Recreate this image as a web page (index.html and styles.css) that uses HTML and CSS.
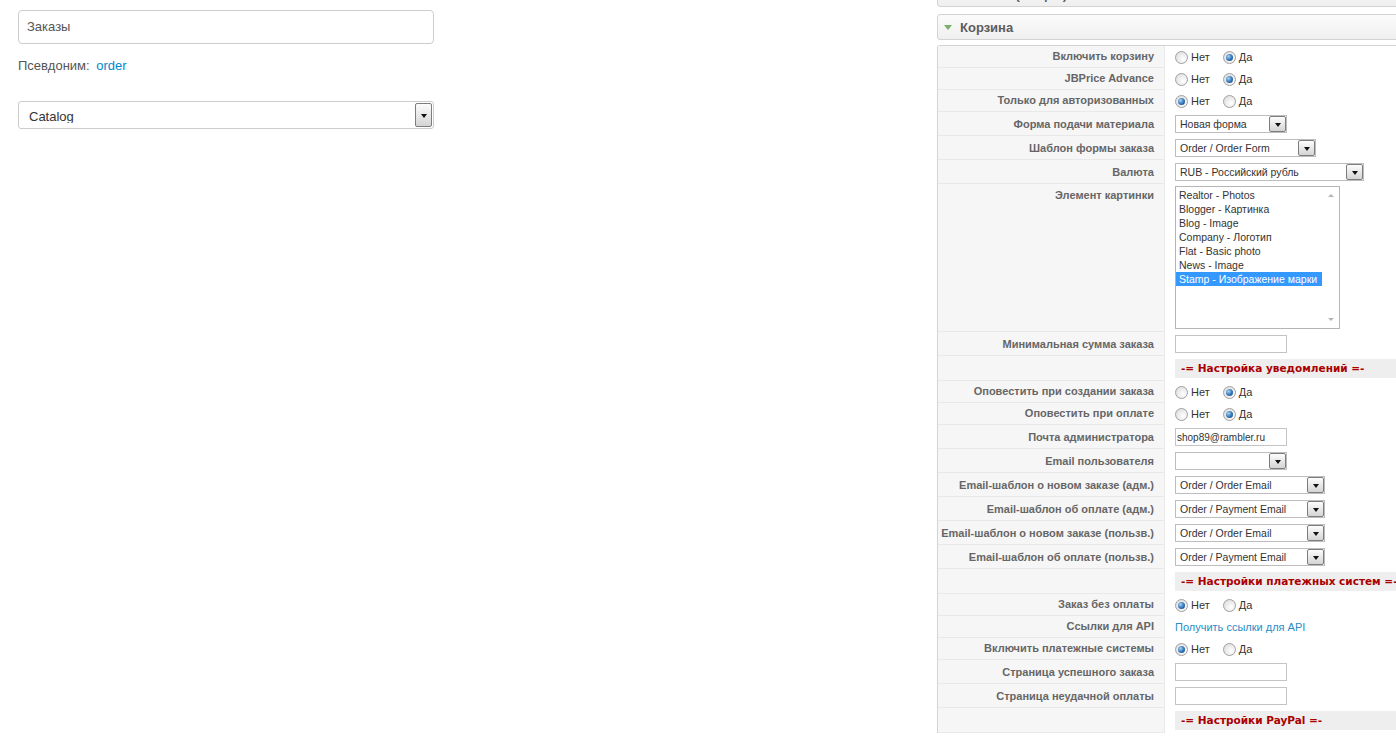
FILE: index.html
```html
<!DOCTYPE html>
<html lang="ru">
<head>
  <meta charset="UTF-8" />
  <meta name="viewport" content="width=device-width, initial-scale=1.0"/>
  <title>Заказы</title>
  <link rel="stylesheet" href="styles.css">
</head>
<body>
  <div class="page">
    <div class="main">
      <div class="title-field">Заказы</div>
      <div class="alias">Псевдоним: <a href="#">order</a></div>
      <div class="big-select">
        <span class="big-select-text">Catalog</span>
        <span class="drop"></span>
      </div>
    </div>

    <div class="side">
      <div class="pane-head">Шаблон (общий)</div>
      <div class="pane-head open">Корзина</div>

      <table class="params">
        <tr>
          <td class="key">Включить корзину</td>
          <td class="val"><div class="radios"><span class="opt"><i class="radio"></i>Нет</span><span class="opt"><i class="radio on"></i>Да</span></div></td>
        </tr>
        <tr>
          <td class="key">JBPrice Advance</td>
          <td class="val"><div class="radios"><span class="opt"><i class="radio"></i>Нет</span><span class="opt"><i class="radio on"></i>Да</span></div></td>
        </tr>
        <tr>
          <td class="key">Только для авторизованных</td>
          <td class="val"><div class="radios"><span class="opt"><i class="radio on"></i>Нет</span><span class="opt"><i class="radio"></i>Да</span></div></td>
        </tr>
        <tr>
          <td class="key">Форма подачи материала</td>
          <td class="val"><div class="sel w-s"><span>Новая форма</span><span class="drop"></span></div></td>
        </tr>
        <tr>
          <td class="key">Шаблон формы заказа</td>
          <td class="val"><div class="sel w-m"><span>Order / Order Form</span><span class="drop"></span></div></td>
        </tr>
        <tr>
          <td class="key">Валюта</td>
          <td class="val"><div class="sel w-l"><span>RUB - Российский рубль</span><span class="drop"></span></div></td>
        </tr>
        <tr>
          <td class="key top">Элемент картинки</td>
          <td class="val tall">
            <div class="listbox">
              <ul>
                <li>Realtor - Photos</li>
                <li>Blogger - Картинка</li>
                <li>Blog - Image</li>
                <li>Company - Логотип</li>
                <li>Flat - Basic photo</li>
                <li>News - Image</li>
                <li class="picked">Stamp - Изображение марки</li>
              </ul>
              <div class="scroll"></div>
            </div>
          </td>
        </tr>
        <tr>
          <td class="key">Минимальная сумма заказа</td>
          <td class="val"><input class="txt" type="text" value=""></td>
        </tr>
        <tr>
          <td class="key"></td>
          <td class="val"><div class="bar">-= Настройка уведомлений =-</div></td>
        </tr>
        <tr>
          <td class="key">Оповестить при создании заказа</td>
          <td class="val"><div class="radios"><span class="opt"><i class="radio"></i>Нет</span><span class="opt"><i class="radio on"></i>Да</span></div></td>
        </tr>
        <tr>
          <td class="key">Оповестить при оплате</td>
          <td class="val"><div class="radios"><span class="opt"><i class="radio"></i>Нет</span><span class="opt"><i class="radio on"></i>Да</span></div></td>
        </tr>
        <tr>
          <td class="key">Почта администратора</td>
          <td class="val"><input class="txt" type="text" value="shop89@rambler.ru"></td>
        </tr>
        <tr>
          <td class="key">Email пользователя</td>
          <td class="val"><div class="sel w-s"><span></span><span class="drop"></span></div></td>
        </tr>
        <tr>
          <td class="key">Email-шаблон о новом заказе (адм.)</td>
          <td class="val"><div class="sel w-e"><span>Order / Order Email</span><span class="drop"></span></div></td>
        </tr>
        <tr>
          <td class="key">Email-шаблон об оплате (адм.)</td>
          <td class="val"><div class="sel w-e"><span>Order / Payment Email</span><span class="drop"></span></div></td>
        </tr>
        <tr>
          <td class="key">Email-шаблон о новом заказе (пользв.)</td>
          <td class="val"><div class="sel w-e"><span>Order / Order Email</span><span class="drop"></span></div></td>
        </tr>
        <tr>
          <td class="key">Email-шаблон об оплате (пользв.)</td>
          <td class="val"><div class="sel w-e"><span>Order / Payment Email</span><span class="drop"></span></div></td>
        </tr>
        <tr>
          <td class="key"></td>
          <td class="val"><div class="bar">-= Настройки платежных систем =-</div></td>
        </tr>
        <tr>
          <td class="key">Заказ без оплаты</td>
          <td class="val"><div class="radios"><span class="opt"><i class="radio on"></i>Нет</span><span class="opt"><i class="radio"></i>Да</span></div></td>
        </tr>
        <tr>
          <td class="key">Ссылки для API</td>
          <td class="val"><a class="api-link" href="#">Получить ссылки для API</a></td>
        </tr>
        <tr>
          <td class="key">Включить платежные системы</td>
          <td class="val"><div class="radios"><span class="opt"><i class="radio on"></i>Нет</span><span class="opt"><i class="radio"></i>Да</span></div></td>
        </tr>
        <tr>
          <td class="key">Страница успешного заказа</td>
          <td class="val"><input class="txt" type="text" value=""></td>
        </tr>
        <tr>
          <td class="key">Страница неудачной оплаты</td>
          <td class="val"><input class="txt" type="text" value=""></td>
        </tr>
        <tr>
          <td class="key"></td>
          <td class="val"><div class="bar">-= Настройки PayPal =-</div></td>
        </tr>
      </table>
    </div>
  </div>
</body>
</html>
```

FILE: styles.css
```css
body {
  margin: 0;
  overflow: hidden;
  background: #fff;
  font-family: "Liberation Sans", Arial, sans-serif;
  color: #333;
}
.page { display: flex; align-items: flex-start; }
.main { flex: none; width: 416px; margin: 10px 0 0 18px; }
.side { flex: none; width: 520px; margin: -19px 0 0 503px; }

/* left column */
.title-field {
  height: 34px;
  box-sizing: border-box;
  border: 1px solid #ccc;
  border-radius: 4px;
  padding: 0 8px;
  line-height: 32px;
  font-size: 13px;
  color: #555;
}
.alias { margin-top: 13px; font-size: 13px; line-height: 18px; color: #555; }
.alias a { color: #08c; text-decoration: none; margin-left: 3px; }
.big-select {
  display: flex;
  justify-content: space-between;
  margin-top: 26px;
  height: 28px;
  box-sizing: border-box;
  border: 1px solid #ccc;
  border-radius: 3px;
  padding: 1px 1px 1px 10px;
}
.big-select-text {
  align-self: flex-start;
  margin-top: 3px;
  height: 17px;
  overflow: hidden;
  line-height: 22px;
  font-size: 13px;
  color: #333;
}
.drop {
  flex: none;
  width: 17px;
  box-sizing: border-box;
  align-self: stretch;
  border: 1px solid #7d7d7d;
  border-radius: 2px;
  background: linear-gradient(#fdfdfd, #d4d4d4);
  display: flex;
  align-items: center;
  justify-content: center;
}
.drop::after {
  content: "";
  border-left: 3px solid transparent;
  border-right: 3px solid transparent;
  border-top: 4px solid #111;
  margin-top: 1px;
}

/* right column */
.pane-head {
  display: flex;
  align-items: center;
  gap: 8px;
  height: 26px;
  box-sizing: border-box;
  border: 1px solid #d3d3d3;
  border-radius: 3px;
  background: linear-gradient(#fbfbfb, #efefef);
  padding-left: 6px;
  font-size: 13px;
  font-weight: bold;
  color: #5c5c5c;
  margin-bottom: 7px;
}
.pane-head::before {
  content: "";
  border-top: 4px solid transparent;
  border-bottom: 4px solid transparent;
  border-left: 5px solid #78b064;
  margin: 0 3px 0 0;
}
.pane-head.open { margin-bottom: 5px; }
.pane-head.open::before {
  border-left: 4px solid transparent;
  border-right: 4px solid transparent;
  border-top: 5px solid #78b064;
  border-bottom: 0;
  margin: 1px 0 0;
}

.params {
  width: 520px;
  table-layout: fixed;
  border-spacing: 0;
  border-top: 1px solid #d3d3d3;
  border-left: 1px solid #d3d3d3;
  border-top-left-radius: 3px;
  font-size: 11px;
}
.params td { padding: 0; }
.params .key {
  width: 227px;
  box-sizing: border-box;
  padding: 4px 10px 4px 0;
  background: #f6f6f6;
  border-bottom: 1px solid #e9e9e9;
  border-right: 1px solid #e9e9e9;
  text-align: right;
  white-space: nowrap;
  font-weight: bold;
  color: #666;
  line-height: 13px;
  vertical-align: bottom;
}
.params .key.top { vertical-align: top; padding-top: 5px; }
.params .val {
  padding: 3px 0 3px 10px;
  line-height: 15px;
  color: #333;
  vertical-align: middle;
}
.params .val.tall { padding: 2px 0 3px 10px; }

.radios { display: flex; align-items: center; height: 15px; }
.opt { display: flex; align-items: center; gap: 3px; margin-right: 13px; }
.radio {
  width: 13px;
  height: 13px;
  box-sizing: border-box;
  border-radius: 50%;
  border: 1px solid #a0a0a0;
  background: radial-gradient(circle at 65% 65%, #fff 0, #dedede 85%);
  display: flex;
  align-items: center;
  justify-content: center;
}
.radio.on::after {
  content: "";
  width: 7px;
  height: 7px;
  border-radius: 50%;
  background: radial-gradient(circle at 35% 35%, #a8d4f5 0, #2f72b4 55%, #143f72 100%);
}

.sel {
  display: flex;
  justify-content: space-between;
  align-items: center;
  height: 18px;
  box-sizing: border-box;
  border: 1px solid #bdbdbd;
  padding: 0 0 0 4px;
  background: #fff;
  font-size: 10.5px;
  color: #333;
  white-space: nowrap;
}
.w-s { width: 112px; }
.w-m { width: 141px; }
.w-l { width: 189px; }
.w-e { width: 150px; }

.txt {
  display: block;
  width: 112px;
  height: 18px;
  box-sizing: border-box;
  margin: 0;
  border: 1px solid #c4c4c4;
  padding: 0 1px;
  font-family: "Liberation Sans", Arial, sans-serif;
  font-size: 10px;
  color: #333;
}

.listbox {
  display: flex;
  width: 165px;
  height: 143px;
  box-sizing: border-box;
  border: 1px solid #b5b5b5;
}
.listbox ul {
  flex: 1;
  list-style: none;
  margin: 0;
  padding: 1px 0 0;
  font-size: 10.5px;
  line-height: 14px;
  white-space: nowrap;
}
.listbox li { padding-left: 3px; }
.listbox li.picked { background: #3399ff; color: #fff; }
.scroll {
  width: 17px;
  display: flex;
  flex-direction: column;
  justify-content: space-between;
  align-items: center;
  padding: 7px 0;
  box-sizing: border-box;
}
.scroll::before, .scroll::after {
  content: "";
  border-left: 3px solid transparent;
  border-right: 3px solid transparent;
}
.scroll::before { border-bottom: 3px solid #b4b4b4; }
.scroll::after { border-top: 3px solid #b4b4b4; }

.bar {
  height: 19px;
  line-height: 19px;
  padding-left: 6px;
  background: #eee;
  font-family: "DejaVu Sans", Verdana, sans-serif;
  font-size: 10.5px;
  font-weight: bold;
  color: #a00;
  white-space: nowrap;
}
.api-link { color: #2a8bc5; text-decoration: none; }
```
